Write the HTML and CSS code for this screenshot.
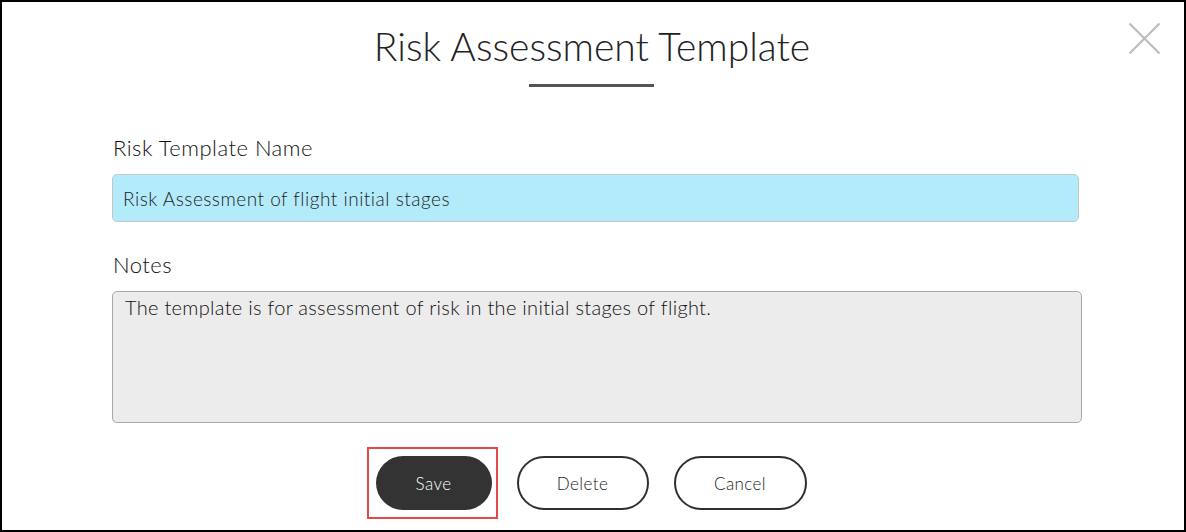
FILE: index.html
```html
<!DOCTYPE html>
<html lang="en">
<head>
<meta charset="utf-8">
<title>Risk Assessment Template</title>
<link rel="stylesheet" href="styles.css">
</head>
<body>
<div class="modal">
  <button class="close" aria-label="Close">
    <svg width="33" height="33" viewBox="0 0 33 33"><path d="M1.5 1.5 L31.5 31.5 M31.5 1.5 L1.5 31.5" stroke="#bdbdbd" stroke-width="2.2" fill="none"/></svg>
  </button>
  <h1 class="title">Risk Assessment Template</h1>
  <div class="rule"></div>
  <div class="field field-name">
    <label class="label" for="name">Risk Template Name</label>
    <input class="input" id="name" type="text" value="Risk Assessment of flight initial stages">
  </div>
  <div class="field field-notes">
    <label class="label" for="notes">Notes</label>
    <textarea class="textarea" id="notes">The template is for assessment of risk in the initial stages of flight.</textarea>
  </div>
  <div class="actions">
    <button class="btn btn-primary highlighted">Save</button>
    <button class="btn btn-outline btn-delete">Delete</button>
    <button class="btn btn-outline btn-cancel">Cancel</button>
  </div>
</div>
</body>
</html>
```
FILE: styles.css
```css
* { box-sizing: border-box; }
html, body { margin: 0; padding: 0; background: #fff; }
body { font-family: Lato, "Open Sans", "Liberation Sans", sans-serif; color: #333; }

.modal {
  position: relative;
  width: 1186px;
  height: 532px;
  border: 2px solid #000;
  display: flex;
  flex-direction: column;
}

.close {
  position: absolute;
  top: 20px;
  right: 23px;
  width: 33px;
  height: 33px;
  padding: 0;
  border: 0;
  background: transparent;
}
.close svg { display: block; }

.title {
  margin: 21px 0 0;
  text-align: center;
  font-weight: 300;
  font-size: 39px;
  line-height: 46px;
  color: #222;
  padding-right: 2px;
}

.rule {
  width: 125px;
  height: 3px;
  background: #555;
  margin: 15px auto 0;
  position: relative;
  left: -2px;
}

.field {
  display: flex;
  flex-direction: column;
  padding-left: 110px;
}
.field-name { margin-top: 48px; }
.field-notes { margin-top: 30px; }

.label {
  font-family: Lato, "Open Sans", sans-serif;
  font-size: 22px;
  line-height: 26px;
  font-weight: 300;
  letter-spacing: 0.5px;
  color: #111;
  padding-left: 1px;
}

.input {
  margin-top: 13px;
  height: 48px;
  width: 967px;
  background: #b3ebfb;
  border: 1px solid #c4c8cc;
  border-radius: 5px;
  padding: 0 10px;
  font-family: Lato, "Open Sans", sans-serif;
  font-size: 19px;
  font-weight: 300;
  letter-spacing: 0.5px;
  color: #1e1e1e;
  outline: none;
}

.textarea {
  margin-top: 13px;
  height: 132px;
  width: 970px;
  background: #ececec;
  border: 1px solid #a9a9a9;
  border-radius: 5px;
  padding: 3px 12px;
  font-family: Lato, "Open Sans", sans-serif;
  font-size: 20px;
  font-weight: 300;
  letter-spacing: 0.3px;
  line-height: 24px;
  color: #111;
  resize: none;
  outline: none;
}

.actions {
  margin-top: 33px;
  display: flex;
  justify-content: center;
  gap: 25px;
  padding-right: 4px;
}

.btn {
  height: 54px;
  border-radius: 27px;
  font-family: Lato, "Open Sans", sans-serif;
  font-size: 17px;
  font-weight: 300;
  letter-spacing: 0.4px;
  padding: 0;
  cursor: pointer;
}
.btn-primary {
  width: 116px;
  background: #333;
  color: #fff;
  border: 0;
}
.btn-outline {
  background: #fff;
  color: #1a1a1a;
  border: 2px solid #2f2f2f;
}
.btn-delete { width: 132px; }
.btn-cancel { width: 133px; }

.highlighted { position: relative; }
.highlighted::after {
  content: "";
  position: absolute;
  left: -9px;
  right: -6px;
  top: -9px;
  bottom: -9px;
  border: 2px solid #e24a4a;
}
```
